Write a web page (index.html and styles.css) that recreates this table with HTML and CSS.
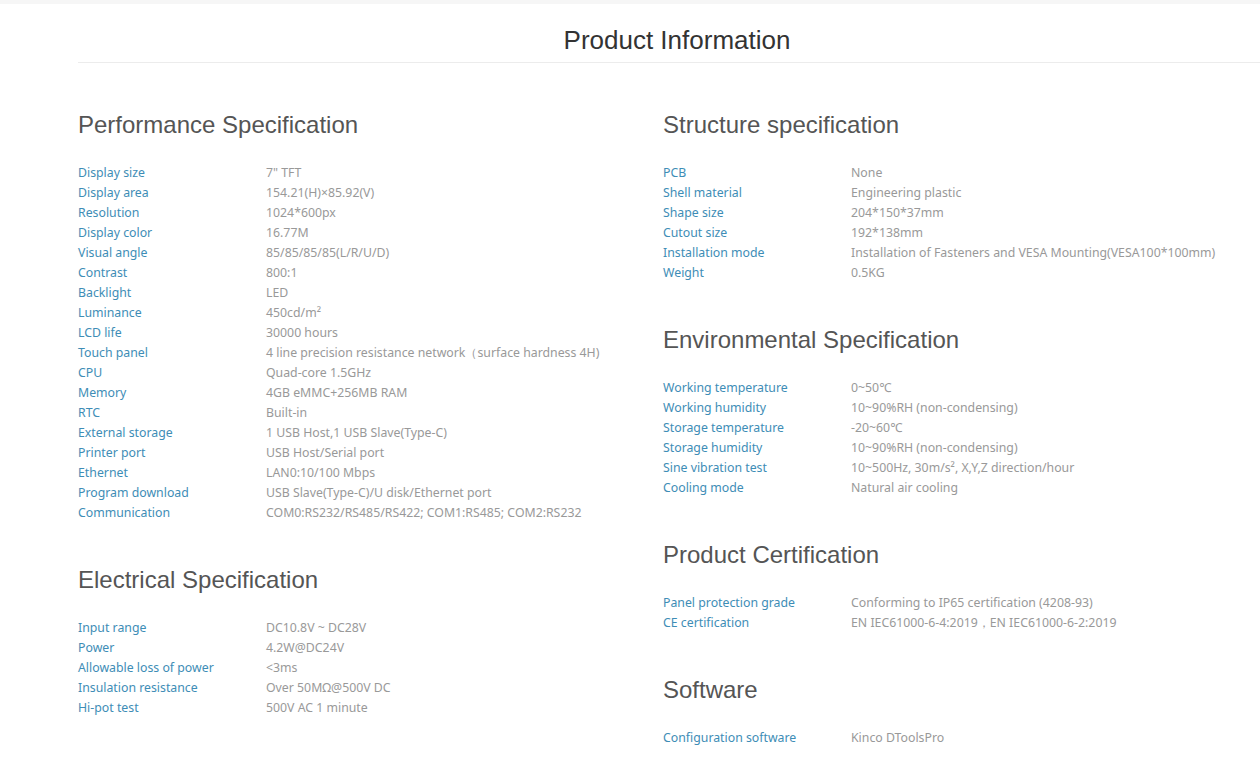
FILE: index.html
```html
<!DOCTYPE html>
<html lang="en">
<head>
<meta charset="utf-8">
<title>Product Information</title>
<link rel="stylesheet" href="styles.css">
</head>
<body>
<div class="topbar"></div>
<header class="page-head">
  <h1 class="page-title">Product Information</h1>
</header>
<main class="columns">
  <div class="col">
    <section class="spec">
      <h2 class="spec-title">Performance Specification</h2>
      <dl class="spec-list">
        <div class="row"><dt>Display size</dt><dd>7" TFT</dd></div>
        <div class="row"><dt>Display area</dt><dd>154.21(H)×85.92(V)</dd></div>
        <div class="row"><dt>Resolution</dt><dd>1024*600px</dd></div>
        <div class="row"><dt>Display color</dt><dd>16.77M</dd></div>
        <div class="row"><dt>Visual angle</dt><dd>85/85/85/85(L/R/U/D)</dd></div>
        <div class="row"><dt>Contrast</dt><dd>800:1</dd></div>
        <div class="row"><dt>Backlight</dt><dd>LED</dd></div>
        <div class="row"><dt>Luminance</dt><dd>450cd/m²</dd></div>
        <div class="row"><dt>LCD life</dt><dd>30000 hours</dd></div>
        <div class="row"><dt>Touch panel</dt><dd>4 line precision resistance network（surface hardness 4H)</dd></div>
        <div class="row"><dt>CPU</dt><dd>Quad-core 1.5GHz</dd></div>
        <div class="row"><dt>Memory</dt><dd>4GB eMMC+256MB RAM</dd></div>
        <div class="row"><dt>RTC</dt><dd>Built-in</dd></div>
        <div class="row"><dt>External storage</dt><dd>1 USB Host,1 USB Slave(Type-C)</dd></div>
        <div class="row"><dt>Printer port</dt><dd>USB Host/Serial port</dd></div>
        <div class="row"><dt>Ethernet</dt><dd>LAN0:10/100 Mbps</dd></div>
        <div class="row"><dt>Program download</dt><dd>USB Slave(Type-C)/U disk/Ethernet port</dd></div>
        <div class="row"><dt>Communication</dt><dd>COM0:RS232/RS485/RS422; COM1:RS485; COM2:RS232</dd></div>
      </dl>
    </section>
    <section class="spec">
      <h2 class="spec-title">Electrical Specification</h2>
      <dl class="spec-list">
        <div class="row"><dt>Input range</dt><dd>DC10.8V ~ DC28V</dd></div>
        <div class="row"><dt>Power</dt><dd>4.2W@DC24V</dd></div>
        <div class="row"><dt>Allowable loss of power</dt><dd>&lt;3ms</dd></div>
        <div class="row"><dt>Insulation resistance</dt><dd>Over 50MΩ@500V DC</dd></div>
        <div class="row"><dt>Hi-pot test</dt><dd>500V AC 1 minute</dd></div>
      </dl>
    </section>
  </div>
  <div class="col">
    <section class="spec">
      <h2 class="spec-title">Structure specification</h2>
      <dl class="spec-list">
        <div class="row"><dt>PCB</dt><dd>None</dd></div>
        <div class="row"><dt>Shell material</dt><dd>Engineering plastic</dd></div>
        <div class="row"><dt>Shape size</dt><dd>204*150*37mm</dd></div>
        <div class="row"><dt>Cutout size</dt><dd>192*138mm</dd></div>
        <div class="row"><dt>Installation mode</dt><dd>Installation of Fasteners and VESA Mounting(VESA100*100mm)</dd></div>
        <div class="row"><dt>Weight</dt><dd>0.5KG</dd></div>
      </dl>
    </section>
    <section class="spec">
      <h2 class="spec-title">Environmental Specification</h2>
      <dl class="spec-list">
        <div class="row"><dt>Working temperature</dt><dd>0~50℃</dd></div>
        <div class="row"><dt>Working humidity</dt><dd>10~90%RH (non-condensing)</dd></div>
        <div class="row"><dt>Storage temperature</dt><dd>-20~60℃</dd></div>
        <div class="row"><dt>Storage humidity</dt><dd>10~90%RH (non-condensing)</dd></div>
        <div class="row"><dt>Sine vibration test</dt><dd>10~500Hz, 30m/s², X,Y,Z direction/hour</dd></div>
        <div class="row"><dt>Cooling mode</dt><dd>Natural air cooling</dd></div>
      </dl>
    </section>
    <section class="spec">
      <h2 class="spec-title">Product Certification</h2>
      <dl class="spec-list">
        <div class="row"><dt>Panel protection grade</dt><dd>Conforming to IP65 certification (4208-93)</dd></div>
        <div class="row"><dt>CE certification</dt><dd>EN IEC61000-6-4:2019，EN IEC61000-6-2:2019</dd></div>
      </dl>
    </section>
    <section class="spec">
      <h2 class="spec-title">Software</h2>
      <dl class="spec-list">
        <div class="row"><dt>Configuration software</dt><dd>Kinco DToolsPro</dd></div>
      </dl>
    </section>
  </div>
</main>
</body>
</html>
```
FILE: styles.css
```css
html, body {
  margin: 0;
  padding: 0;
  background: #ffffff;
}
body {
  font-family: "Noto Sans", "Open Sans", "Liberation Sans", sans-serif;
  font-size: 12.3px;
  color: #999999;
}
.topbar {
  height: 4px;
  background: #f6f6f6;
}
.page-head {
  margin-left: 78px;
  padding-top: 21px;
  border-bottom: 1px solid #ececec;
  height: 37px;
}
.page-title {
  margin: 0;
  font-family: "Liberation Sans", Arial, sans-serif;
  font-weight: normal;
  font-size: 26px;
  line-height: 30px;
  color: #333333;
  text-align: center;
  padding-left: 16px;
}
.columns {
  display: grid;
  grid-template-columns: 585px 1fr;
  padding-left: 78px;
  padding-top: 47px;
}
.col {
  display: flex;
  flex-direction: column;
  gap: 42px;
}
.spec-title {
  margin: 0 0 23px;
  font-family: "Liberation Sans", Arial, sans-serif;
  font-weight: normal;
  font-size: 24px;
  line-height: 30px;
  color: #555555;
}
.spec-list {
  margin: 0;
}
.row {
  display: grid;
  grid-template-columns: 188px 1fr;
  line-height: 20px;
}
.row dt {
  color: #3e8db6;
}
.row dd {
  margin: 0;
  color: #999999;
}
```
